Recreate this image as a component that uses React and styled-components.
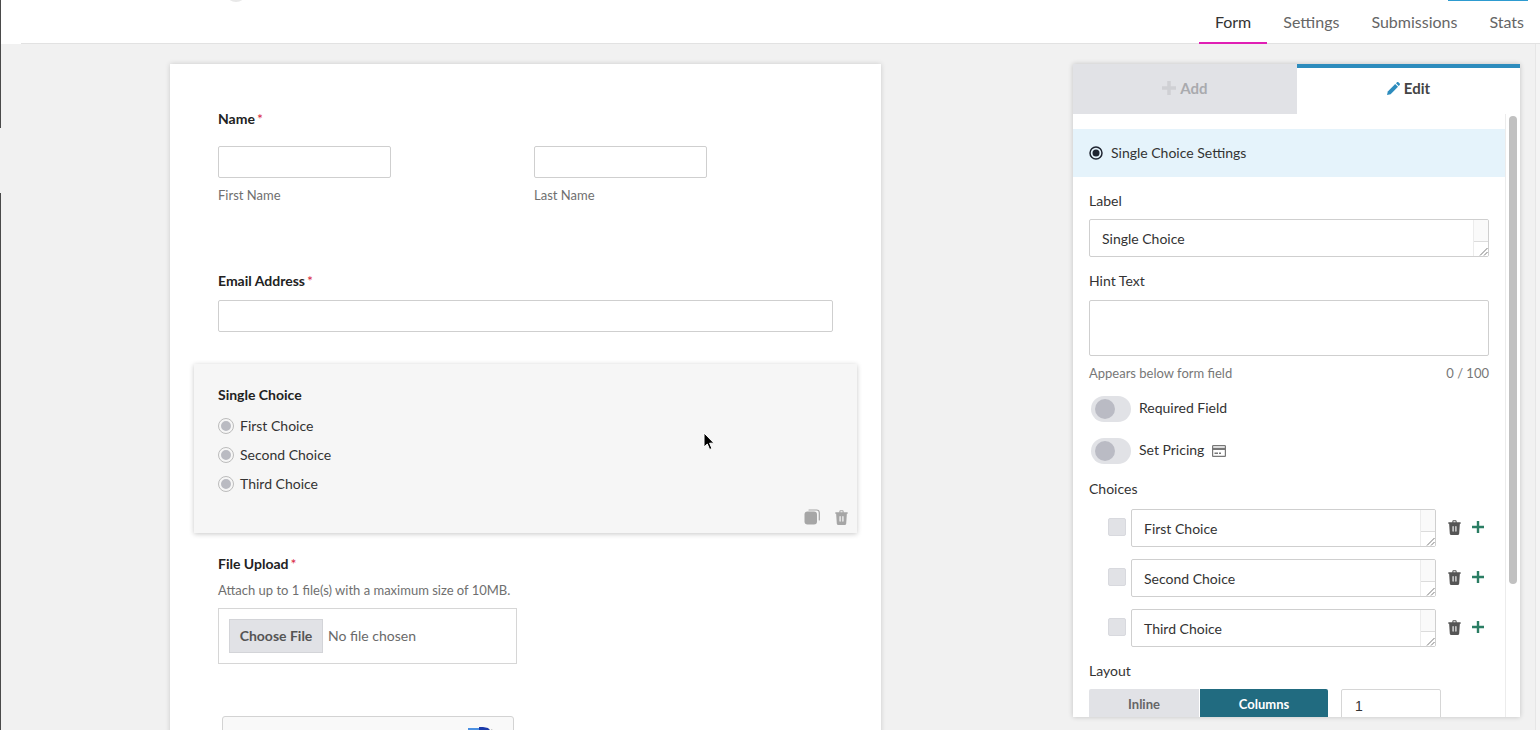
import React from 'react'
import styled, { createGlobalStyle } from 'styled-components'

const GlobalStyle = createGlobalStyle`
  html, body {
    margin: 0;
    height: 730px;
    overflow: hidden;
    background: #f1f1f1;
    font-family: Lato, "Open Sans", sans-serif;
    font-size: 14px;
    color: #333;
  }
  * { box-sizing: border-box; }
`

const TrashIcon = ({ size = 15, color = '#555' }) => (
  <svg width={size} height={size} viewBox="0 0 14 14" fill={color}>
    <path d="M5 1.200C5 .6 5.500.2 6 .2h2c.5 0 1 .4 1 1V2h3.200c.4 0 .8.3.8.7s-.4.8-.8.8H12l-.6 9c0 .8-.7 1.400-1.400 1.400H4c-.7 0-1.400-.6-1.400-1.400l-.6-9h-.2C1.400 3.500 1 3.100 1 2.700S1.400 2 1.800 2H5v-.8zM6 1.200V2h2v-.8H6z" />
    <rect x="5" y="5.500" width="1.400" height="5.500" rx=".7" fill="#fff" fillOpacity=".75" />
    <rect x="7.600" y="5.500" width="1.400" height="5.500" rx=".7" fill="#fff" fillOpacity=".75" />
  </svg>
)

const CopyIcon = () => (
  <svg width="16" height="16" viewBox="0 0 16 16" fill="#a6a6a6">
    <rect x="0.500" y="2.500" width="12.500" height="13" rx="3" />
    <path d="M5 1h7.500A2.800 2.800 0 0 1 15.300 3.800V11" fill="none" stroke="#a6a6a6" strokeWidth="1.200" strokeLinecap="round" />
  </svg>
)

const CardIcon = () => (
  <svg width="14" height="12" viewBox="0 0 14 12" fill="#777">
    <path d="M1.300 0h11.400C13.400 0 14 .6 14 1.300v9.400c0 .7-.6 1.300-1.300 1.300H1.300C.6 12 0 11.400 0 10.700V1.300C0 .6.600 0 1.300 0zM1.200 1.200v1.600h11.600V1.200H1.200zm0 3.800v5.800h11.600V5H1.200z" />
    <rect x="2.500" y="7.500" width="3.500" height="1.500" />
    <rect x="7" y="7.500" width="2" height="1.500" />
  </svg>
)

const PlusIcon = ({ size = 12, color = '#2a7d63', weight = 2.400 }) => (
  <svg width={size} height={size} viewBox="0 0 12 12" fill="none" stroke={color} strokeWidth={weight}>
    <path d="M6 0v12M0 6h12" />
  </svg>
)

const PencilIcon = () => (
  <svg width="13" height="13" viewBox="0 0 13 13" fill="#2d8cbd">
    <path d="M0 13l.8-3.600 7.400-7.400 2.800 2.800-7.400 7.400z" />
    <path d="M9 1.200L10 .3c.4-.4 1-.4 1.400 0l1.300 1.300c.4.4.4 1 0 1.400l-1 1z" />
  </svg>
)

const RadioOnIcon = () => (
  <svg width="14" height="14" viewBox="0 0 14 14">
    <circle cx="7" cy="7" r="6" fill="none" stroke="#1f2430" strokeWidth="1.500" />
    <circle cx="7" cy="7" r="3.500" fill="#1f2430" />
  </svg>
)

const Cursor = () => (
  <svg width="12" height="19" viewBox="0 0 12 19">
    <path d="M1 1v14l3.300-3 2.300 5.500 2.300-1-2.300-5.300H11z" fill="#000" stroke="#fff" strokeWidth="1" />
  </svg>
)

const ResizeGrip = () => (
  <svg width="9" height="9" viewBox="0 0 9 9" stroke="#555" strokeWidth=".8">
    <path d="M1 8.500L8.500 1M5 8.500L8.500 5" />
  </svg>
)

const RecaptchaMark = () => (
  <svg width="30" height="8" viewBox="0 0 30 8">
    <path d="M0 1h13v7H0z" fill="#4a90e2" />
    <path d="M11 0h4l5 1 2 2v5H11z" fill="#1c3aa9" />
    <path d="M23 2l2 1v5h-2z" fill="#bdbdbd" />
  </svg>
)

function TextBox({ value, height = 38, width }) {
  return (
    <Box $height={height} $width={width}>
      <BoxText>{value}</BoxText>
      <Gutter>
        <GripCell><ResizeGrip /></GripCell>
      </Gutter>
    </Box>
  )
}

function Toggle({ children }) {
  return (
    <ToggleRow>
      <ToggleTrack><ToggleKnob /></ToggleTrack>
      <ToggleText>{children}</ToggleText>
    </ToggleRow>
  )
}

function ChoiceRow({ value }) {
  return (
    <ChoiceLine>
      <ChoiceCheck />
      <TextBox value={value} width={305} />
      <ChoiceActions>
        <TrashIcon />
        <PlusIcon />
      </ChoiceActions>
    </ChoiceLine>
  )
}

const nav = ['Form', 'Settings', 'Submissions', 'Stats']
const choices = ['First Choice', 'Second Choice', 'Third Choice']

export default function App() {
  return (
    <Page>
      <GlobalStyle />
      <EdgeLine $top={0} $height={128} />
      <EdgeLine $top={193} $height={537} />
      <LogoArc />
      <TopButton />
      <Header>
        <Tabs>
          {nav.map((t, i) => <NavTab key={t} $active={i === 0}>{t}</NavTab>)}
        </Tabs>
      </Header>
      <PageGutter />
      <Main>
        <FormCard>
          <FieldLabel>Name<Req>*</Req></FieldLabel>
          <NameRow>
            <NameCol>
              <Input $width={173} />
              <Caption>First Name</Caption>
            </NameCol>
            <NameCol>
              <Input $width={173} />
              <Caption>Last Name</Caption>
            </NameCol>
          </NameRow>
          <FieldLabel $mt={67}>Email Address<Req>*</Req></FieldLabel>
          <Input $width={615} $mt={9} />
          <ChoiceBlock>
            <FieldLabel>Single Choice</FieldLabel>
            <RadioList>
              {choices.map(c => (
                <RadioRow key={c}><RadioDot />{c}</RadioRow>
              ))}
            </RadioList>
            <BlockActions>
              <CopyIcon />
              <TrashIcon color="#a6a6a6" />
            </BlockActions>
            <CursorSpot><Cursor /></CursorSpot>
          </ChoiceBlock>
          <FieldLabel $mt={21}>File Upload<Req>*</Req></FieldLabel>
          <UploadHint>Attach up to 1 file(s) with a maximum size of 10MB.</UploadHint>
          <UploadBox>
            <ChooseBtn>Choose File</ChooseBtn>
            <NoFile>No file chosen</NoFile>
          </UploadBox>
          <Captcha>
            <CaptchaLogo><RecaptchaMark /></CaptchaLogo>
          </Captcha>
        </FormCard>

        <Panel>
          <PanelTabs>
            <AddTab><PlusIcon size={14} color="#cfd0d4" weight={3} /> Add</AddTab>
            <EditTab><PencilIcon /> Edit</EditTab>
          </PanelTabs>
          <PanelBody>
            <PanelContent>
              <SettingsHead><RadioOnIcon />Single Choice Settings</SettingsHead>
              <Fields>
                <SideLabel $mt={14}>Label</SideLabel>
                <TextBox value="Single Choice" />
                <SideLabel $mt={14} $mb={9}>Hint Text</SideLabel>
                <PlainArea />
                <HelpRow>
                  <span>Appears below form field</span>
                  <span>0 / 100</span>
                </HelpRow>
                <Toggle>Required Field</Toggle>
                <Toggle>Set Pricing <CardIcon /></Toggle>
                <SideLabel $mt={15} $mb={10}>Choices</SideLabel>
                <ChoiceList>
                  {choices.map(c => <ChoiceRow key={c} value={c} />)}
                </ChoiceList>
                <SideLabel $mt={14}>Layout</SideLabel>
                <LayoutRow>
                  <SegBtn>Inline</SegBtn>
                  <SegBtn $active>Columns</SegBtn>
                  <ColumnsInput>1</ColumnsInput>
                </LayoutRow>
              </Fields>
            </PanelContent>
            <ScrollTrack><ScrollThumb /></ScrollTrack>
          </PanelBody>
        </Panel>
      </Main>
    </Page>
  )
}

const Page = styled.div`
  position: relative;
  width: 1540px;
  height: 730px;
  overflow: hidden;
`
const EdgeLine = styled.div`
  position: absolute;
  left: 0;
  top: ${p => p.$top}px;
  width: 1px;
  height: ${p => p.$height}px;
  background: #4a4a4a;
  z-index: 3;
`
const LogoArc = styled.div`
  position: absolute;
  left: 225px;
  top: -20px;
  width: 22px;
  height: 22px;
  border-radius: 50%;
  background: #e8e8e8;
  z-index: 3;
`
const TopButton = styled.div`
  position: absolute;
  left: 1448px;
  top: 0;
  width: 80px;
  height: 1px;
  background: #2d9bd0;
  z-index: 3;
`
const Header = styled.header`
  height: 44px;
  background: #fff;
  display: flex;
  justify-content: flex-end;
  position: relative;
  &::after {
    content: '';
    position: absolute;
    left: 21px;
    right: 0;
    bottom: 0;
    height: 1px;
    background: #e2e2e2;
  }
`
const Tabs = styled.nav`
  display: flex;
  height: 44px;
`
const NavTab = styled.div`
  padding: 12px 16px 0;
  font-size: 16px;
  line-height: 20px;
  height: 44px;
  color: ${p => (p.$active ? '#333' : '#666')};
  position: relative;
  z-index: 1;
  border-bottom: 2px solid ${p => (p.$active ? '#e01fb4' : 'transparent')};
`
const PageGutter = styled.div`
  position: absolute;
  left: 1535px;
  top: 44px;
  width: 5px;
  bottom: 0;
  background: #f4f4f4;
  border-left: 1px solid #e6e6e6;
`
const Main = styled.main`
  display: flex;
  align-items: flex-start;
  padding: 20px 0 0 170px;
  height: 686px;
`
const FormCard = styled.section`
  width: 711px;
  height: 700px;
  flex: none;
  background: #fff;
  padding: 45px 24px 0;
  box-shadow: 0 0 5px rgba(0, 0, 0, 0.16);
`
const FieldLabel = styled.div`
  font-weight: 700;
  font-size: 14px;
  line-height: 20px;
  height: 20px;
  color: #222;
  margin-left: 24px;
  margin-top: ${p => p.$mt || 0}px;
`
const Req = styled.span`
  color: #d9263f;
  font-weight: 400;
  margin-left: 2px;
`
const NameRow = styled.div`
  display: flex;
  margin: 17px 0 0 24px;
`
const NameCol = styled.div`
  width: 316px;
`
const Input = styled.div`
  width: ${p => p.$width}px;
  height: 32px;
  background: #fff;
  border: 1px solid #cfcfcf;
  border-radius: 2px;
  margin-top: ${p => p.$mt || 0}px;
  margin-left: ${p => (p.$mt ? 24 : 0)}px;
`
const Caption = styled.div`
  margin-top: 8px;
  font-size: 13px;
  line-height: 18px;
  color: #6f6f6f;
`
const ChoiceBlock = styled.div`
  position: relative;
  margin-top: 32px;
  height: 169px;
  padding-top: 21px;
  background: #f6f6f6;
  box-shadow: 0 1px 5px rgba(0, 0, 0, 0.22);
`
const RadioList = styled.div`
  margin: 6px 0 0 24px;
`
const RadioRow = styled.div`
  display: flex;
  align-items: center;
  gap: 6px;
  height: 29px;
  color: #333;
`
const RadioDot = styled.span`
  width: 14px;
  height: 14px;
  border-radius: 50%;
  background: #babbc2;
  border: 2px solid #f6f6f6;
  outline: 1px solid #bcbcbc;
  margin: 0 1px;
`
const BlockActions = styled.div`
  position: absolute;
  right: 8px;
  bottom: 8px;
  display: flex;
  align-items: flex-end;
  gap: 14px;
`
const CursorSpot = styled.div`
  position: absolute;
  left: 509px;
  top: 68px;
  line-height: 0;
`
const UploadHint = styled.div`
  margin: 7px 0 0 24px;
  font-size: 13px;
  line-height: 18px;
  color: #6f6f6f;
`
const UploadBox = styled.div`
  margin: 9px 0 0 24px;
  width: 299px;
  height: 56px;
  border: 1px solid #d6d6d6;
  display: flex;
  align-items: center;
  padding-left: 10px;
  gap: 5px;
`
const ChooseBtn = styled.div`
  width: 94px;
  height: 34px;
  padding-bottom: 2px;
  background: #e1e2e6;
  border: 1px solid #d3d4d8;
  font-weight: 700;
  color: #555;
  display: flex;
  align-items: center;
  justify-content: center;
`
const NoFile = styled.span`
  color: #6a6a6a;
  margin-bottom: 2px;
`
const Captcha = styled.div`
  position: relative;
  margin: 52px 0 0 28px;
  width: 292px;
  height: 76px;
  background: #f9f9f9;
  border: 1px solid #d3d3d3;
  border-radius: 3px;
`
const CaptchaLogo = styled.div`
  position: absolute;
  left: 245px;
  top: 10px;
  line-height: 0;
`
const Panel = styled.aside`
  width: 447px;
  height: 653px;
  margin-left: 192px;
  flex: none;
  background: #fff;
  box-shadow: 0 0 5px rgba(0, 0, 0, 0.2);
  display: flex;
  flex-direction: column;
`
const PanelTabs = styled.div`
  display: flex;
  height: 50px;
  flex: none;
`
const AddTab = styled.div`
  width: 224px;
  padding-bottom: 2px;
  background: #e1e2e6;
  color: #a9aaae;
  font-weight: 700;
  font-size: 15px;
  display: flex;
  align-items: center;
  justify-content: center;
  gap: 4px;
`
const EditTab = styled.div`
  flex: 1;
  padding-bottom: 6px;
  background: #fff;
  border-top: 4px solid #2d8cbd;
  color: #444;
  font-weight: 700;
  font-size: 15px;
  display: flex;
  align-items: center;
  justify-content: center;
  gap: 4px;
`
const PanelBody = styled.div`
  flex: 1;
  min-height: 0;
  display: flex;
`
const PanelContent = styled.div`
  flex: 1;
  min-width: 0;
  overflow: hidden;
  padding-top: 15px;
`
const SettingsHead = styled.div`
  height: 48px;
  padding: 0 0 2px 16px;
  background: #e5f3fb;
  display: flex;
  align-items: center;
  gap: 8px;
  color: #333;
  svg {
    margin-top: 1px;
  }
`
const Fields = styled.div`
  padding: 0 16px;
`
const SideLabel = styled.div`
  line-height: 20px;
  color: #333;
  margin-top: ${p => p.$mt || 0}px;
  margin-bottom: ${p => p.$mb || 8}px;
`
const Box = styled.div`
  display: flex;
  width: ${p => (p.$width ? `${p.$width}px` : '100%')};
  height: ${p => p.$height}px;
  flex: none;
  background: #fff;
  border: 1px solid #cfcfcf;
  border-radius: 2px;
  overflow: hidden;
`
const BoxText = styled.div`
  flex: 1;
  padding-left: 12px;
  line-height: 37px;
  color: #333;
`
const Gutter = styled.div`
  width: 15px;
  flex: none;
  background: #fafafa;
  border-left: 1px solid #ececec;
  display: flex;
  flex-direction: column;
  justify-content: flex-end;
`
const GripCell = styled.div`
  height: 15px;
  background: #fff;
  border-top: 1px solid #dcdcdc;
  display: flex;
  align-items: flex-end;
  justify-content: flex-end;
  line-height: 0;
`
const PlainArea = styled.div`
  height: 56px;
  background: #fff;
  border: 1px solid #cfcfcf;
  border-radius: 2px;
`
const HelpRow = styled.div`
  display: flex;
  justify-content: space-between;
  margin-top: 8px;
  font-size: 13px;
  line-height: 18px;
  color: #777;
`
const ToggleRow = styled.div`
  display: flex;
  align-items: center;
  gap: 8px;
  height: 26px;
  margin: 14px 0 0 2px;
  color: #333;
  & + & {
    margin-top: 16px;
  }
`
const ToggleText = styled.div`
  display: flex;
  align-items: center;
  gap: 8px;
  margin-top: -4px;
  svg {
    margin-top: 3px;
  }
`
const ToggleTrack = styled.div`
  width: 40px;
  height: 26px;
  border-radius: 13px;
  background: #e1e2e6;
  padding: 3px 4px;
`
const ToggleKnob = styled.div`
  width: 20px;
  height: 20px;
  border-radius: 50%;
  background: #babbc4;
`
const ChoiceList = styled.div`
  display: flex;
  flex-direction: column;
  gap: 12px;
  padding-left: 19px;
`
const ChoiceLine = styled.div`
  display: flex;
  align-items: center;
`
const ChoiceCheck = styled.div`
  width: 18px;
  height: 18px;
  margin: -2px 5px 0 0;
  border-radius: 2px;
  background: #e1e2e6;
  border: 1px solid #d8d9de;
`
const ChoiceActions = styled.div`
  display: flex;
  align-items: center;
  gap: 10px;
  margin: -2px 0 0 11px;
  svg:last-child {
    margin-top: -1px;
  }
`
const LayoutRow = styled.div`
  display: flex;
  height: 40px;
`
const SegBtn = styled.div`
  height: 40px;
  width: ${p => (p.$active ? 128 : 110)}px;
  margin-right: ${p => (p.$active ? 13 : 1)}px;
  padding-top: 6px;
  text-align: center;
  font-size: 13px;
  line-height: 18px;
  font-weight: 700;
  border-radius: ${p => (p.$active ? '0 2px 0 0' : '2px 0 0 0')};
  background: ${p => (p.$active ? '#216b80' : '#e1e2e6')};
  color: ${p => (p.$active ? '#fff' : '#666')};
`
const ColumnsInput = styled.div`
  width: 100px;
  height: 40px;
  padding: 6px 0 0 13px;
  line-height: 20px;
  font-family: "Liberation Sans", sans-serif;
  font-size: 14px;
  color: #333;
  border: 1px solid #d6d6d6;
  border-radius: 2px;
`
const ScrollTrack = styled.div`
  width: 15px;
  flex: none;
  padding: 2px 3px 0;
  border-left: 1px solid #ececec;
`
const ScrollThumb = styled.div`
  height: 468px;
  border-radius: 4px;
  background: #c1c1c1;
`
